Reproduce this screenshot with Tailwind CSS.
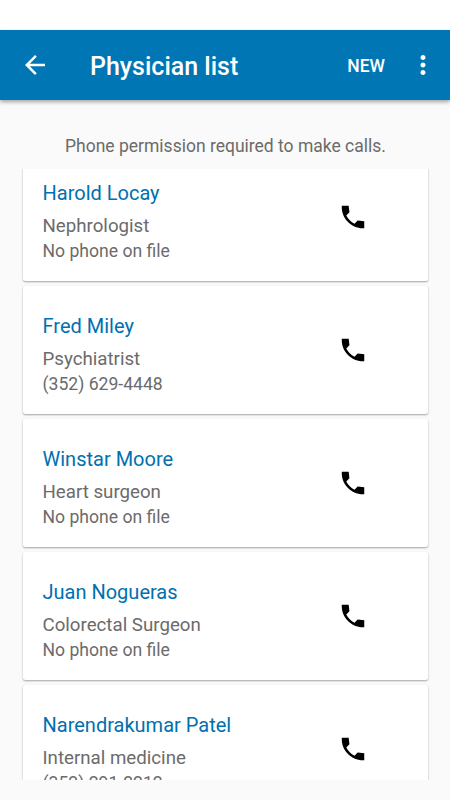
<!DOCTYPE html>
<html lang="en">
<head>
  <meta charset="UTF-8">
  <meta name="viewport" content="width=device-width, initial-scale=1.0">
  <title>Physician list</title>
  <script src="https://cdn.jsdelivr.net/npm/@tailwindcss/browser@4"></script>
</head>
<body class="bg-[#fafafa] font-[Roboto,sans-serif] text-[#6b6b6b]">
  <div class="flex h-[800px] w-[450px] flex-col overflow-hidden">
    <div class="h-[30px] shrink-0 bg-white"></div>

    <header class="flex h-[70px] shrink-0 items-center bg-[#0076b5] pl-5 pr-[12.5px] text-white shadow-[0_2px_4px_rgba(0,0,0,0.35)]">
      <svg class="size-[30px]" viewBox="0 0 24 24" fill="currentColor">
        <path d="M20 11H7.83l5.59-5.59L12 4l-8 8 8 8 1.41-1.41L7.83 13H20v-2z"/>
      </svg>
      <h1 class="ml-10 grow pt-[3px] text-[25px] font-medium leading-[30px]">Physician list</h1>
      <button class="mr-[22.5px] pt-0.5 text-[17.5px] font-medium">NEW</button>
      <svg class="size-[30px]" viewBox="0 0 24 24" fill="currentColor">
        <path d="M12 8c1.1 0 2-.9 2-2s-.9-2-2-2-2 .9-2 2 .9 2 2 2zm0 2c-1.1 0-2 .9-2 2s.9 2 2 2 2-.9 2-2-.9-2-2-2zm0 6c-1.1 0-2 .9-2 2s.9 2 2 2 2-.9 2-2-.9-2-2-2z"/>
      </svg>
    </header>

    <p class="h-[69px] shrink-0 pl-px pt-9 text-center text-[17.5px] leading-[21px]">Phone permission required to make calls.</p>

    <!-- scrolled list, first and last cards are cut off -->
    <main id="list" class="flex h-[611px] shrink-0 flex-col justify-start gap-[4.5px] overflow-hidden px-[22.5px]"></main>
  </div>

  <script>
    const physicians = [
      { name: 'Harold Locay', specialty: 'Nephrologist', phone: 'No phone on file' },
      { name: 'Fred Miley', specialty: 'Psychiatrist', phone: '(352) 629-4448' },
      { name: 'Winstar Moore', specialty: 'Heart surgeon', phone: 'No phone on file' },
      { name: 'Juan Nogueras', specialty: 'Colorectal Surgeon', phone: 'No phone on file' },
      { name: 'Narendrakumar Patel', specialty: 'Internal medicine', phone: '(352) 291-2212' },
    ];

    const list = document.getElementById('list');

    physicians.forEach(physician => {
      const card = document.createElement('div');
      card.className = 'flex h-[128.5px] shrink-0 items-center justify-between rounded-[2.5px] bg-white pl-5 pr-[60px] shadow-[0_1px_2px_rgba(0,0,0,0.35)] first:-mt-[16.5px]';
      card.innerHTML = `<div class="pt-[11px]">
                          <h2 class="text-[20px] leading-6 text-[#0070b0]">${physician.name}</h2>
                          <p class="mt-[9px] text-[18.7px] leading-6">${physician.specialty}</p>
                          <p class="mt-px text-[17.6px] leading-6">${physician.phone}</p>
                        </div>
                        <svg class="size-[30px] text-black" viewBox="0 0 24 24" fill="currentColor">
                          <path d="M21 15.46l-5.27-.61-2.52 2.52c-2.83-1.44-5.15-3.75-6.59-6.59l2.53-2.53L8.54 3H3.03C2.45 13.18 10.82 21.55 21 20.97v-5.51z"/>
                        </svg>`;
      list.appendChild(card);
    });
  </script>
</body>
</html>
